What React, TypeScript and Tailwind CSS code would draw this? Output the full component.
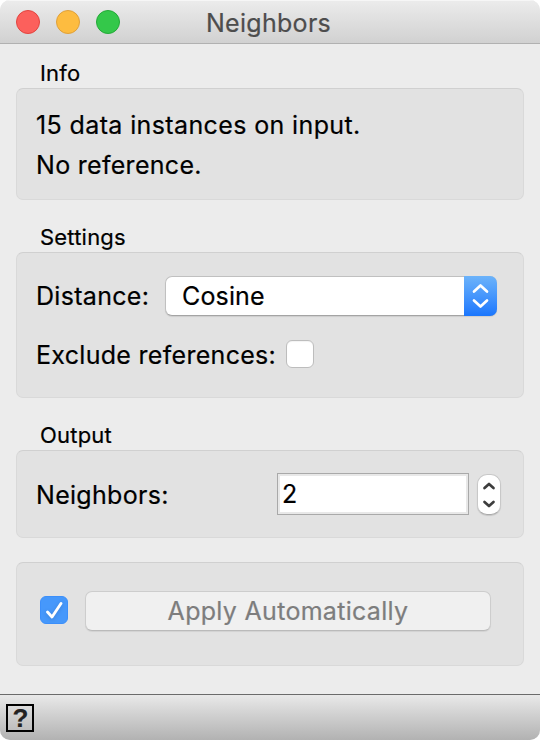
import React from "react";

function Group({ title, className, children }: { title?: string; className: string; children: React.ReactNode }) {
  return (
    <section className="px-4">
      {title && <h2 className="h-[30px] pl-6 text-[22px] leading-[30px] tracking-[0.2px]">{title}</h2>}
      <div className={"rounded-[7px] border border-[#d9d9d9] border-t-[#d0d0d0] bg-[#e2e2e2] " + className}>
        {children}
      </div>
    </section>
  );
}

export default function App() {
  return (
    <div className="h-[740px] w-[540px] bg-white font-['Inter',sans-serif] text-[25px] leading-10 tracking-[0.3px] text-black [-webkit-text-stroke:0.2px]">
      <div className="flex h-full flex-col overflow-hidden rounded-[10px] bg-[#ececec]">
        <header className="grid h-11 shrink-0 grid-cols-[1fr_auto_1fr] items-center border-b border-[#b1b1b1] bg-gradient-to-b from-[#ececec] to-[#d1d1d1] shadow-[inset_0_1px_0_#f6f6f6]">
          <div className="flex gap-4 pl-4">
            <span className="size-6 rounded-full border border-[#e2443f] bg-[#fc605c]" />
            <span className="size-6 rounded-full border border-[#dfa03a] bg-[#fdbc40]" />
            <span className="size-6 rounded-full border border-[#24a938] bg-[#34c84a]" />
          </div>
          <h1 className="pr-[3px] pt-[3px] text-[#4d4d4d]">Neighbors</h1>
        </header>

        <main className="flex flex-col">
          <div className="h-3.5" />
          <Group title="Info" className="h-28 px-[19px] pt-4">
            <p className="tracking-[0.38px]">15 data instances on input.</p>
            <p>No reference.</p>
          </Group>
          <div className="h-[22px]" />
          <Group title="Settings" className="h-[146px] pl-[19px] pt-[23px]">
            <div className="flex h-10">
              <span className="w-[129px] whitespace-nowrap">Distance:</span>
              <div className="flex h-10 w-[332px] rounded-[7px] border border-[#c0c0c0] border-b-[#a4a4a4] bg-white shadow-[0_1px_1px_#00000018]">
                <span className="flex-1 pl-4 leading-[38px] tracking-[0.15px]">Cosine</span>
                <span className="-mr-px -mt-px flex h-10 w-[33px] items-center justify-center rounded-r-[7px] bg-gradient-to-b from-[#6cb3fa] to-[#1a76fd]">
                  <svg width="33" height="40" fill="none" stroke="white" strokeWidth="2.7" strokeLinecap="round" strokeLinejoin="round">
                    <path d="M10 15.5 16.5 9.5 23 15.5M10 24.5 16.5 30.5 23 24.5" />
                  </svg>
                </span>
              </div>
            </div>
            <div className="mt-[18px] flex h-10 items-start">
              <span className="w-[250px] whitespace-nowrap pt-px">Exclude references:</span>
              <span className="mt-[6px] size-7 rounded-md border border-[#bdbdbd] bg-white shadow-[inset_0_1px_1px_#0000000d]" />
            </div>
          </Group>
          <div className="h-[22px]" />
          <Group title="Output" className="flex h-[88px] pl-[19px] pt-[22px]">
            <span className="mt-0.5 w-[241px]">Neighbors:</span>
            <div className="h-[42px] w-[192px] border border-[#a9a9a9] bg-[#e8e8e8] p-0.5">
              <div className="h-9 bg-white pl-0.5 leading-[36px]">2</div>
            </div>
            <div className="ml-2 mt-px h-[41px] w-6 rounded-[10px] border border-[#c8c8c8] border-b-[#aaa] bg-white shadow-[0_1px_1px_#00000020]">
              <svg width="22" height="39" fill="none" stroke="#3d3d3d" strokeWidth="2.7" strokeLinecap="round" strokeLinejoin="round">
                <path d="M6.5 13 11 9 15.5 13M6.5 27 11 31 15.5 27" />
              </svg>
            </div>
          </Group>
          <div className="h-6" />
          <Group className="flex h-[104px] items-start pl-[23px] pt-7">
            <span className="mt-[5px] size-7 rounded-[6px] border border-[#3c8ffa] bg-[#4698fb]">
              <svg width="26" height="26" fill="none" stroke="white" strokeWidth="2.8" strokeLinecap="round" strokeLinejoin="round" className="drop-shadow-sm">
                <path d="M6.5 15 11 20 20 6.5" />
              </svg>
            </span>
            <div className="ml-[17px] h-10 w-[406px] rounded-[7px] border border-[#cdcdcd] border-b-[#bababa] bg-[#f0f0f0] text-center leading-[38px] text-[#7d7d7d] shadow-[0_1px_1px_#00000012]">
              Apply Automatically
            </div>
          </Group>
        </main>

        <footer className="mt-auto h-[46px] border-t border-[#6b6b6b] bg-gradient-to-b from-[#e9e9e9] to-[#b2b2b2] pl-1.5 pt-[9px]">
          <div className="size-7 border-2 border-black pl-px text-center text-[26px] font-bold leading-[25px] text-[#222] font-['Liberation_Sans',sans-serif]">?</div>
        </footer>
      </div>
    </div>
  );
}
